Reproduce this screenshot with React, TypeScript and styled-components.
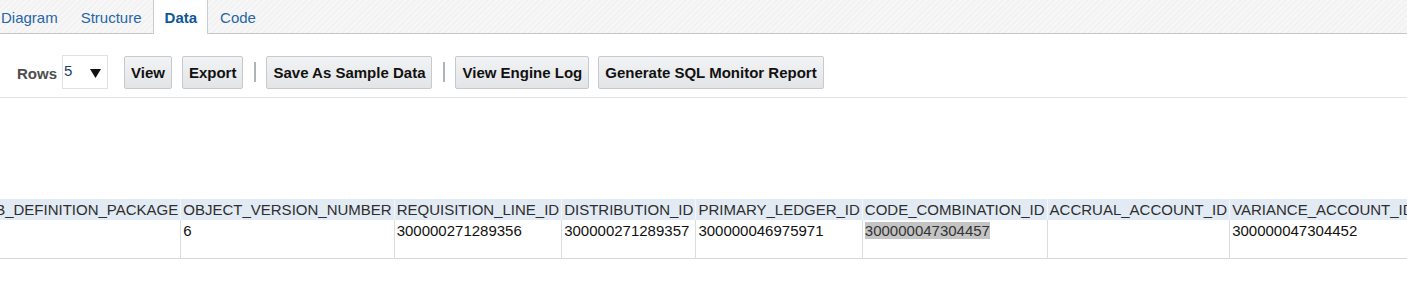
import styled, { createGlobalStyle } from "styled-components";

const GlobalStyle = createGlobalStyle`
  body {
    margin: 0;
    background: #fff;
    font-family: "Liberation Sans", Arial, sans-serif;
  }
`;

const tabs = ["Diagram", "Structure", "Data", "Code"];

const columns = [
  { name: "JOB_DEFINITION_PACKAGE", value: "" },
  { name: "OBJECT_VERSION_NUMBER", value: "6" },
  { name: "REQUISITION_LINE_ID", value: "300000271289356" },
  { name: "DISTRIBUTION_ID", value: "300000271289357" },
  { name: "PRIMARY_LEDGER_ID", value: "300000046975971" },
  { name: "CODE_COMBINATION_ID", value: "300000047304457", selected: true },
  { name: "ACCRUAL_ACCOUNT_ID", value: "" },
  { name: "VARIANCE_ACCOUNT_ID", value: "300000047304452" },
];

const App = () => {
  return (
    <Page>
      <GlobalStyle />
      <TabBar>
        <TabList>
          {tabs.map((tab) => (
            <Tab key={tab} $active={tab === "Data"}>
              {tab}
            </Tab>
          ))}
        </TabList>
      </TabBar>

      <Toolbar>
        <RowsLabel>Rows</RowsLabel>
        <RowsSelect>
          <span>5</span>
          <svg width="11" height="9" viewBox="0 0 11 9">
            <polygon points="0,0 11,0 5.5,9" fill="#111" />
          </svg>
        </RowsSelect>
        <Button $gap={16}>View</Button>
        <Button $gap={10}>Export</Button>
        <Separator />
        <Button $gap={10}>Save As Sample Data</Button>
        <Separator />
        <Button $gap={10}>View Engine Log</Button>
        <Button $gap={9}>Generate SQL Monitor Report</Button>
      </Toolbar>

      <TableViewport>
        <DataTable>
          <thead>
            <tr>
              {columns.map((c) => (
                <HeadCell key={c.name}>{c.name}</HeadCell>
              ))}
            </tr>
          </thead>
          <tbody>
            <tr>
              {columns.map((c) => (
                <Cell key={c.name}>
                  {c.selected ? <Selected>{c.value}</Selected> : c.value}
                </Cell>
              ))}
            </tr>
          </tbody>
        </DataTable>
      </TableViewport>
    </Page>
  );
};

const Page = styled.div`
  width: 100%;
  overflow: hidden;
`;

const TabBar = styled.div`
  height: 33px;
  border-bottom: 1px solid #c3c8cd;
  background: repeating-linear-gradient(
    -45deg,
    #f2f2f2 0px,
    #f2f2f2 2px,
    #f7f7f7 2px,
    #f7f7f7 4px
  );
`;

const TabList = styled.div`
  display: flex;
  margin-left: -11px;
  height: 100%;
`;

const Tab = styled.div<{ $active?: boolean }>`
  box-sizing: border-box;
  padding: 1px 10px 0 11px;
  height: ${({ $active }) => ($active ? "34px" : "33px")};
  line-height: 33px;
  font-size: 15px;
  color: ${({ $active }) => ($active ? "#0f5796" : "#2766a8")};
  font-weight: ${({ $active }) => ($active ? "bold" : "normal")};
  background: ${({ $active }) => ($active ? "#fff" : "transparent")};
  border-left: 1px solid ${({ $active }) => ($active ? "#c8cdd2" : "transparent")};
  border-right: 1px solid ${({ $active }) => ($active ? "#c8cdd2" : "transparent")};
  white-space: nowrap;
`;

const Toolbar = styled.div`
  display: flex;
  align-items: center;
  padding: 21px 0 8px 17px;
  border-bottom: 1px solid #dde0e4;
`;

const RowsLabel = styled.span`
  font-size: 15px;
  font-weight: bold;
  color: #4d4d4d;
  padding-top: 3px;
  margin-right: 5px;
`;

const RowsSelect = styled.div`
  box-sizing: border-box;
  width: 46px;
  height: 34px;
  border: 1px solid #dfe2e5;
  display: flex;
  align-items: center;
  justify-content: space-between;
  padding: 0 6px 0 1px;
  font-size: 15px;
  color: #1d3f6e;
  span {
    margin-top: -3px;
  }
  svg {
    margin-top: 2px;
  }
`;

const Button = styled.button<{ $gap: number }>`
  margin-left: ${({ $gap }) => $gap}px;
  box-sizing: border-box;
  height: 33px;
  padding: 0 6px;
  font-family: "Liberation Sans", Arial, sans-serif;
  font-size: 15px;
  font-weight: bold;
  color: #111;
  border: 1px solid #c6cacf;
  border-radius: 2px;
  background: linear-gradient(#f2f3f4, #e2e4e6);
  white-space: nowrap;
  cursor: pointer;
`;

const Separator = styled.div`
  width: 2px;
  height: 20px;
  margin-left: 11px;
  background: #aeb4ba;
`;

const TableViewport = styled.div`
  padding-top: 101px;
  overflow: hidden;
`;

const DataTable = styled.table`
  border-collapse: separate;
  border-spacing: 0;
  margin-left: -26px;
  font-size: 15px;
  white-space: nowrap;
`;

const HeadCell = styled.th`
  text-align: left;
  font-weight: normal;
  color: #2e2e2e;
  background: #e2eaf3;
  padding: 1px 2px 1px 2px;
  line-height: 19px;
  border-left: 1px solid #f4f7fa;
  &:first-child {
    border-left: none;
  }
`;

const Cell = styled.td`
  vertical-align: top;
  height: 35px;
  padding: 2px 2px 1px 2px;
  line-height: 17px;
  color: #111;
  border-left: 1px solid #dadde0;
  border-bottom: 1px solid #d6d9dc;
  &:first-child {
    border-left: none;
  }
`;

const Selected = styled.span`
  background: #c4c4c4;
  color: #333;
`;

export default App;
